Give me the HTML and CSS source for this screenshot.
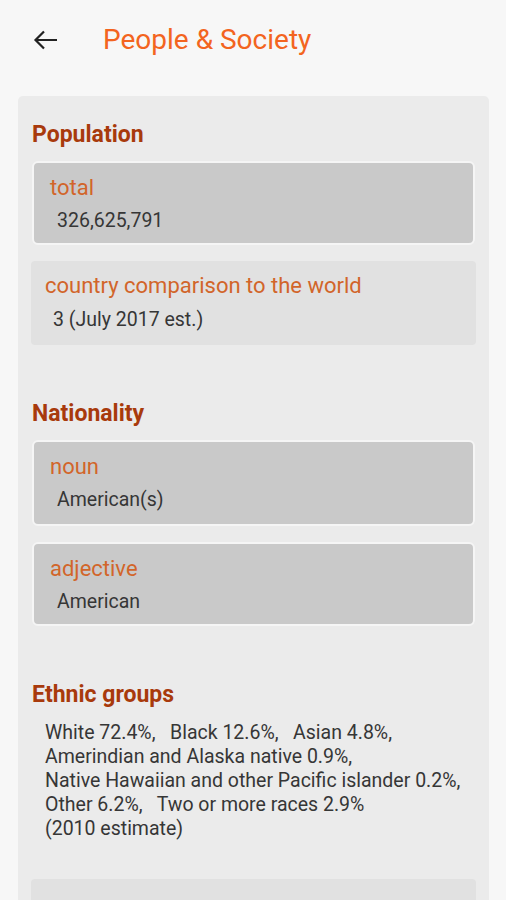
FILE: index.html
```html
<!DOCTYPE html>
<html>
<head>
<meta charset="utf-8">
<link rel="stylesheet" href="styles.css">
</head>
<body>
<header class="topbar">
  <svg class="back" width="26" height="22" viewBox="0 0 26 22">
    <path d="M2.5 11H24M11 2.5L2.5 11L11 19.5" fill="none" stroke="#222" stroke-width="2.2" stroke-linecap="butt" stroke-linejoin="miter"/>
  </svg>
  <h1 class="title">People &amp; Society</h1>
</header>
<main class="card">
  <section class="group">
    <h2 class="heading">Population</h2>
    <div class="item item-dark">
      <div class="label">total</div>
      <div class="value">326,625,791</div>
    </div>
    <div class="item item-light">
      <div class="label">country comparison to the world</div>
      <div class="value">3 (July 2017 est.)</div>
    </div>
  </section>
  <section class="group">
    <h2 class="heading">Nationality</h2>
    <div class="item item-dark item-tall">
      <div class="label">noun</div>
      <div class="value">American(s)</div>
    </div>
    <div class="item item-dark">
      <div class="label">adjective</div>
      <div class="value">American</div>
    </div>
  </section>
  <section class="group">
    <h2 class="heading">Ethnic groups</h2>
    <div class="para">White 72.4%,&nbsp;&nbsp; Black 12.6%,&nbsp;&nbsp; Asian 4.8%,<br>Amerindian and Alaska native 0.9%,<br>Native Hawaiian and other Pacific islander 0.2%,<br>Other 6.2%,&nbsp;&nbsp; Two or more races 2.9%<br>(2010 estimate)</div>
    <div class="item item-light item-next">
      <div class="label">&nbsp;</div>
      <div class="value">&nbsp;</div>
    </div>
  </section>
</main>
</body>
</html>
```
FILE: styles.css
```css
html, body {
  margin: 0;
  padding: 0;
}
body {
  background: #f7f7f7;
  font-family: Roboto, "Noto Sans", sans-serif;
  width: 506px;
  height: 900px;
  overflow: hidden;
}
.topbar {
  height: 80px;
  display: flex;
  align-items: center;
  padding-left: 33px;
  box-sizing: border-box;
}
.back {
  display: block;
}
.title {
  margin: 0 0 0 44px;
  font-size: 28px;
  font-weight: 400;
  color: #f36420;
  line-height: 32px;
}
.card {
  margin: 16px 17px 0 18px;
  background: #ebebeb;
  border-radius: 5px;
  padding: 25px 13px 0 13px;
  height: 900px;
  box-sizing: border-box;
}
.group {
  margin-bottom: 55px;
}
.heading {
  margin: 0 0 0 1px;
  font-size: 23px;
  font-weight: 700;
  color: #a83a0c;
  line-height: 28px;
}
.item {
  border-radius: 6px;
}
.item-dark {
  background: #c9c9c9;
  border: 2px solid #f5f5f5;
  margin: 12px 1px 0 1px;
  padding: 13px 0 10px 16px;
}
.item-tall {
  padding-bottom: 12px;
}
.item-dark + .item-dark {
  margin-top: 16px;
}
.item-light {
  background: #e1e1e1;
  margin: 16px 0 0 0;
  padding: 13px 0 13px 14px;
  border-radius: 4px;
}
.label {
  font-size: 22px;
  line-height: 24px;
  color: #d2652a;
}
.value {
  font-size: 19.5px;
  line-height: 24px;
  color: #363636;
  margin: 9px 0 0 8px;
}
.item-light .value {
  margin-top: 10px;
}
.item-dark .value {
  margin-left: 7px;
}
.para {
  font-size: 19.5px;
  line-height: 24px;
  color: #363636;
  margin: 12px 0 0 14px;
}
.item-next {
  margin-top: 38px;
}
```
